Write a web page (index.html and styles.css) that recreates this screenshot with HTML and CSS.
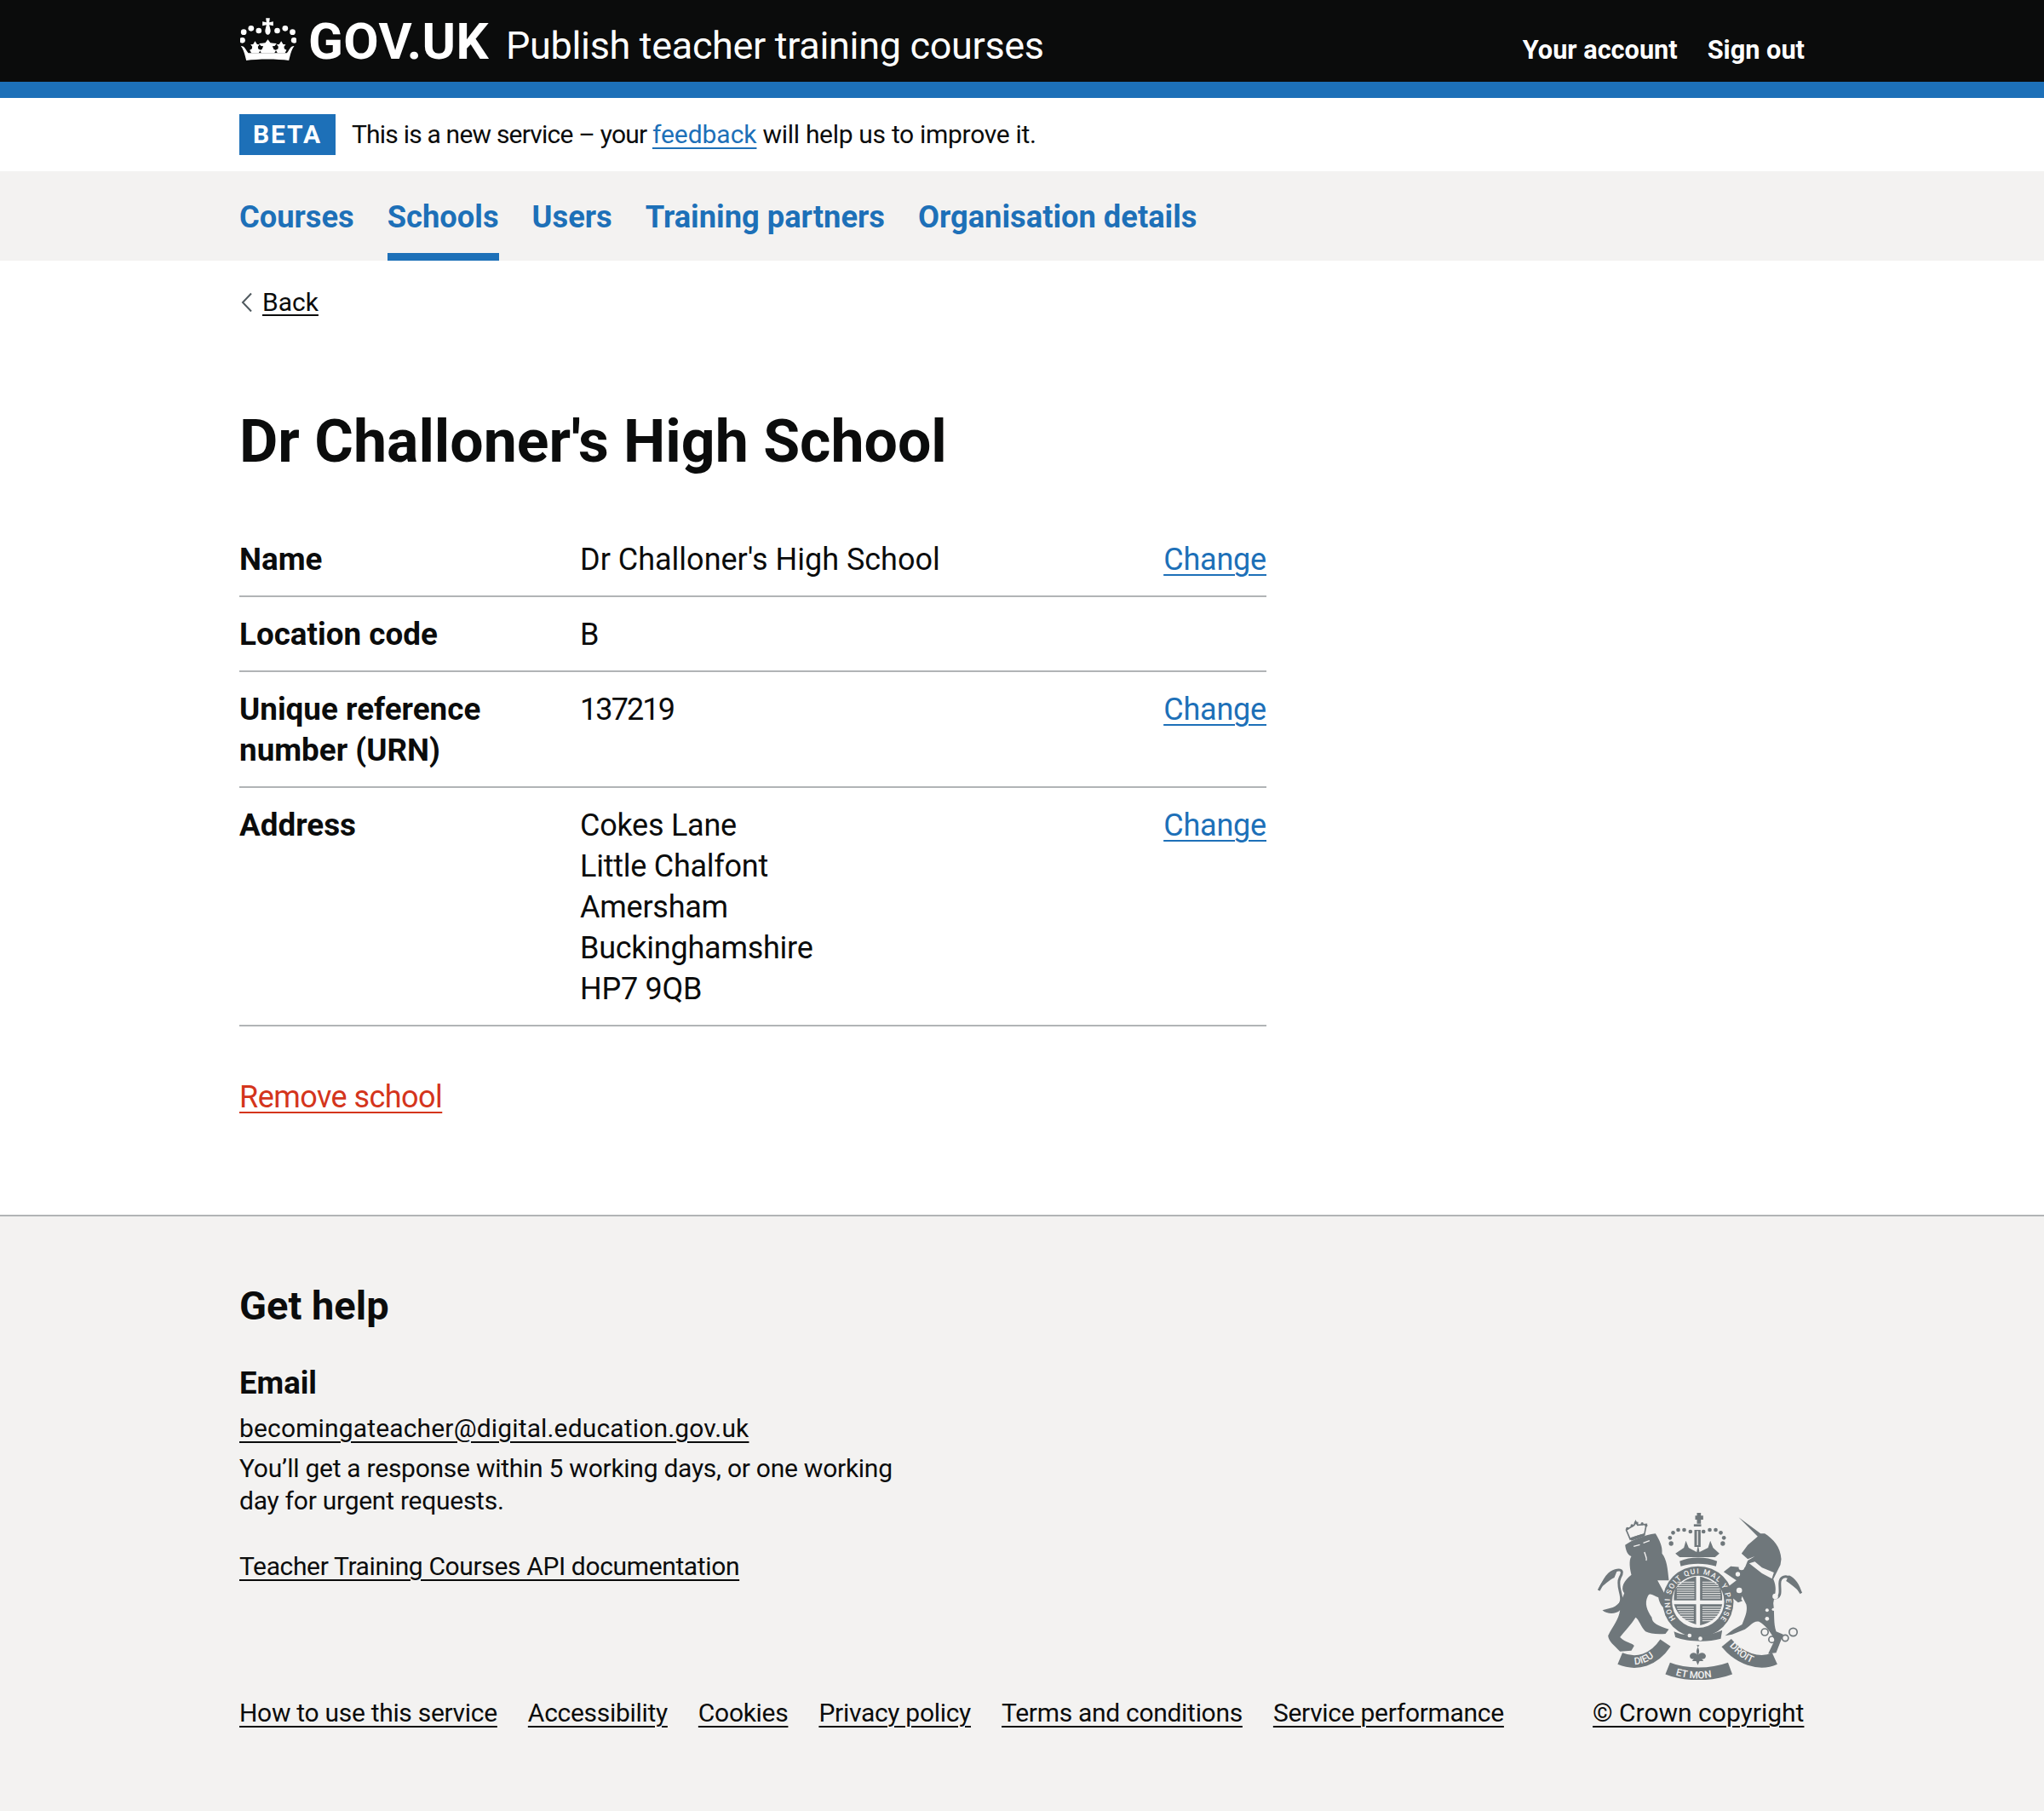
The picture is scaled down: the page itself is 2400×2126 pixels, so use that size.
FILE: index.html
```html
<!DOCTYPE html>
<html lang="en">
<head>
<meta charset="utf-8">
<title>Dr Challoner's High School</title>
<link rel="stylesheet" href="styles.css">
</head>
<body>
<header class="top">
  <div class="wrap top-in">
    <a class="logo" href="#">
      <svg class="crown" viewBox="68 2 197 150" aria-hidden="true">
        <g fill="#fff">
          <circle cx="80" cy="52" r="10"/><circle cx="106" cy="39" r="10"/><circle cx="133" cy="47" r="10"/>
          <circle cx="198" cy="47" r="10"/><circle cx="226" cy="39" r="10"/><circle cx="252" cy="52" r="10"/>
          <circle cx="75" cy="81" r="10"/><circle cx="257" cy="81" r="10"/>
          <path d="M158 3h14l-2 15 14-3v15l-14-3 4 16c2 10-3 18-9 18s-11-8-9-18l4-16-14 3V15l14 3z"/>
          <path d="M70 101c10-1 15 8 21 18l5 7h136l5-7c6-10 11-19 21-18-8 10-12 24-15 35l-4 16c-40-6-110-6-150 0l-4-16c-3-11-7-25-15-35z"/>
          <path d="M120 84l7 11 9 1-6 7 1 8 8 4-6 11h-26l-6-11 8-4 1-8-6-7 9-1z"/>
          <path d="M165 78l9 12 11 1 11 1-7 9-8 1 5 11 8 3-6 10h-46l-6-10 8-3 5-11-8-1-7-9 11-1 11-1z"/>
          <path d="M212 84l7 11 9 1-6 7 1 8 8 4-6 11h-26l-6-11 8-4 1-8-6-7 9-1z"/>
        </g>
      </svg>
      <span class="logo-text">GOV.UK</span>
    </a>
    <a class="service" href="#">Publish teacher training courses</a>
    <nav class="account">
      <a href="#">Your account</a>
      <a href="#">Sign out</a>
    </nav>
  </div>
</header>
<div class="rule"></div>
<div class="beta">
  <strong class="tag">BETA</strong>
  <span class="beta-text"><span class="beta-lead">This is a new service – your </span><a href="#">feedback</a> will help us to improve it.</span>
</div>
<nav class="tabs">
  <div class="wrap tabs-in">
    <a href="#">Courses</a>
    <a href="#" class="current">Schools</a>
    <a href="#">Users</a>
    <a href="#">Training partners</a>
    <a href="#">Organisation details</a>
  </div>
</nav>
<main class="main">
  <a class="back" href="#"><svg class="chev" viewBox="0 0 14 24" aria-hidden="true"><path d="M12 1.5 2 12l10 10.5" fill="none" stroke="#505a5f" stroke-width="2"/></svg><span>Back</span></a>
  <h1 class="title">Dr Challoner's High School</h1>
  <dl class="summary">
    <div class="row"><dt>Name</dt><dd>Dr Challoner's High School</dd><dd class="act"><a href="#">Change</a></dd></div>
    <div class="row"><dt>Location code</dt><dd>B</dd><dd class="act"></dd></div>
    <div class="row"><dt>Unique reference number (URN)</dt><dd><span class="num">137219</span></dd><dd class="act"><a href="#">Change</a></dd></div>
    <div class="row"><dt>Address</dt><dd class="addr">Cokes Lane<br>Little Chalfont<br>Amersham<br>Buckinghamshire<br>HP7 9QB</dd><dd class="act"><a href="#">Change</a></dd></div>
  </dl>
  <a class="remove" href="#">Remove school</a>
</main>
<footer class="foot">
  <div class="wrap foot-in">
    <div class="foot-left">
      <h2 class="help">Get help</h2>
      <h3 class="email">Email</h3>
      <p class="mail"><a href="#">becomingateacher@digital.education.gov.uk</a></p>
      <p class="resp">You’ll get a response within 5 working days, or one working day for urgent requests.</p>
      <p class="api"><a href="#">Teacher Training Courses API documentation</a></p>
      <ul class="meta">
        <li><a href="#">How to use this service</a></li>
        <li><a href="#">Accessibility</a></li>
        <li><a href="#">Cookies</a></li>
        <li><a href="#">Privacy policy</a></li>
        <li><a href="#">Terms and conditions</a></li>
        <li><a href="#">Service performance</a></li>
      </ul>
    </div>
    <div class="foot-right">
      <svg class="crest" viewBox="60 40 740 600" aria-label="Royal coat of arms">
        <defs>
          <path id="gar" d="M346 425A99 99 0 1 1 504 425"/>
          <path id="rib-l" d="M190 585C230 590 270 570 305 520"/>
          <path id="rib-m" d="M335 620C390 640 460 640 515 620"/>
          <path id="rib-r" d="M530 515C570 560 610 590 650 585"/>
        </defs>
        <g class="ink">
          <path d="M168 165C190 150 235 130 275 125C290 150 300 170 298 195C315 215 318 250 322 290L282 290L325 370L318 392C300 388 290 375 285 350C270 345 255 330 248 345C235 370 245 395 262 420C262 440 285 450 322 462L310 478C280 480 255 478 240 470C225 455 215 425 205 420C190 445 165 470 150 490C170 510 195 510 200 520L190 537L150 540C130 520 110 505 108 485C125 450 145 430 150 395C135 410 105 410 88 395L125 385C150 375 160 350 165 335C150 315 165 290 190 270C185 250 180 220 190 205C175 200 170 180 168 165Z"/>
          <path class="face" d="M198 170l22-6M232 158l22-8M236 190c4 14 10 22 6 30"/>
          <path class="tail" d="M128 392C185 360 130 320 150 280C170 245 140 250 118 262C100 272 90 300 75 325"/>
          <path d="M72 325C85 290 110 265 140 255L130 280C110 290 95 305 72 325Z"/>
          <path d="M172 112L200 95L205 82L212 95L243 92L236 128C220 130 200 138 186 145Z" class="hollow"/>
          <circle cx="176" cy="107" r="5"/><circle cx="192" cy="97" r="5"/><circle cx="228" cy="90" r="5"/><circle cx="242" cy="96" r="5"/><path d="M200 84h14v8h-14z"/><path d="M186 140l50-16 2 10-48 16z"/>
          <path d="M568 68L645 125L660 125C690 145 715 170 718 215L715 235L690 285C705 320 695 340 690 370C695 410 690 440 700 470L725 480L700 545L672 548L695 500C680 470 660 445 640 435C620 430 610 450 590 462L545 480L520 485L550 462L580 445C590 420 600 400 595 375L580 345L575 365L520 320L560 290L515 260L540 240L590 245L600 220L625 205L600 215L578 195L600 165L635 135Z"/>
          <path class="tail" d="M693 352C735 350 695 290 725 278C750 268 765 300 788 335"/>
          <path d="M745 272C765 280 785 305 790 335C770 320 750 300 735 292Z"/>
          <circle cx="330" cy="160" r="8"/><circle cx="326" cy="140" r="7"/><circle cx="337" cy="122" r="7"/><circle cx="355" cy="112" r="7"/><circle cx="376" cy="112" r="7"/><circle cx="398" cy="118" r="7"/>
          <circle cx="512" cy="160" r="8"/><circle cx="516" cy="140" r="7"/><circle cx="505" cy="122" r="7"/><circle cx="487" cy="112" r="7"/><circle cx="466" cy="112" r="7"/><circle cx="444" cy="118" r="7"/>
          <path d="M415 62h6v-10h14v10h8v14h-8v14h-14v-14h-6z"/><rect x="410" y="92" width="26" height="8"/>
          <path d="M412 112h22v60h-22z"/><path class="thin" d="M423 116v50"/>
          <path d="M345 195L375 175L382 150L392 175L420 190L425 165L430 190L460 175L468 150L478 175L500 195L485 208H360Z"/>
          <path d="M360 222C395 205 455 205 492 222L488 240C450 228 400 228 364 240Z"/>
          <circle cx="425" cy="365" r="125"/>
          <circle cx="425" cy="365" r="92" class="paper"/>
          <path d="M345 320C375 285 400 280 418 276V360H340C340 345 340 335 345 320Z"/>
          <path d="M432 276C455 282 490 295 505 320C510 335 510 345 510 360H432Z"/>
          <path d="M340 374H418V445C385 435 355 420 340 374Z"/>
          <path d="M432 374H510C500 420 470 440 432 448Z"/>
          <path class="stripe" d="M352 296h60M352 304h60M352 312h60M350 320h62M350 328h62M350 336h62M350 344h62M350 352h62M440 296h50M440 304h56M440 312h60M440 320h62M440 328h62M440 336h64M440 344h64M440 352h64M440 384h66M440 392h66M440 400h64M440 408h62M440 416h60M440 424h56M440 432h46M350 384h60M352 392h58M356 400h54M360 408h50M364 416h46M372 424h38M380 432h30"/>
          <path d="M340 470C380 490 460 490 510 465L505 495C455 510 385 505 345 490Z"/>
          <circle cx="395" cy="484" r="7" class="paper"/><circle cx="433" cy="495" r="7" class="paper"/>
          <path d="M506 295L582 362L566 368L496 310Z"/>
          <circle cx="578" cy="244" r="10" class="paper"/><circle cx="565" cy="268" r="8" class="paper"/><circle cx="570" cy="325" r="10" class="paper"/><circle cx="697" cy="346" r="10" class="paper"/><circle cx="668" cy="395" r="6" class="paper"/><circle cx="690" cy="392" r="5" class="paper"/><circle cx="668" cy="425" r="7" class="paper"/>
          <path d="M605 230L625 224L650 245L692 262L685 284L650 265Z" class="paper"/>
          <g class="rings"><circle cx="660" cy="472" r="12"/><circle cx="685" cy="498" r="11"/><circle cx="732" cy="493" r="11"/><circle cx="760" cy="472" r="14"/></g>
          <path class="rib" d="M150 565C210 590 270 570 310 510"/>
          <path class="rib" d="M318 600C380 625 470 625 538 600"/>
          <path class="rib" d="M525 510C570 565 640 590 695 565"/>
          <path d="M420 518c8 12 12 22 6 34c8-12 22-8 26 2c2 10-8 16-14 12l6 8h-14l-6 14-6-14h-14l6-8c-6 4-16-2-14-12c4-10 18-14 26-2c-6-12-2-22 8-34z"/>
        </g>
        <g class="motto">
          <text class="m-ring"><textPath href="#gar" textLength="440">HONI SOIT QUI MAL Y PENSE</textPath></text>
          <text class="m-rib"><textPath href="#rib-l" startOffset="8%">DIEU</textPath></text>
          <text class="m-rib"><textPath href="#rib-m" startOffset="6%">ET MON</textPath></text>
          <text class="m-rib"><textPath href="#rib-r" startOffset="5%">DROIT</textPath></text>
        </g>
      </svg>
      <a class="copy" href="#">© Crown copyright</a>
    </div>
  </div>
</footer>
</body>
</html>
```
FILE: styles.css
```css
* { box-sizing: border-box; }
html, body { margin: 0; padding: 0; }
body { font-family: Roboto, "Liberation Sans", sans-serif; color: #0b0c0c; background: #f3f2f1; font-size: 36px; line-height: 48px; }
a { color: inherit; text-decoration-thickness: 2px; text-underline-offset: 5px; }
.wrap { width: 1838px; margin-left: 281px; }

/* header */
.top { background: #0b0c0c; height: 96px; color: #fff; }
.top-in { display: flex; align-items: baseline; height: 96px; padding-top: 14px; }
.logo { display: flex; align-items: baseline; text-decoration: none; color: #fff; }
.crown { width: 66px; height: 50px; margin: 7px 14px 0 1px; align-self: flex-start; }
.logo-text { font-size: 60px; line-height: 70px; font-weight: 700; letter-spacing: 0.4px; }
.service { margin-left: 20px; font-size: 45px; line-height: 70px; color: #fff; text-decoration: none; letter-spacing: -0.33px; }
.account { margin-left: auto; display: flex; gap: 35px; font-size: 30.7px; font-weight: 700; }
.account a { text-decoration: none; }
.rule { height: 19px; background: #1d70b8; }

/* beta */
.beta { display: flex; align-items: center; height: 86px; padding-left: 281px; background: #fff; }
.tag { display: block; width: 113px; height: 48px; background: #1d70b8; color: #fff; font-size: 30px; line-height: 48px; text-align: center; letter-spacing: 1.9px; font-weight: 700; }
.beta-text { margin-left: 19px; font-size: 30px; letter-spacing: -0.31px; }
.beta-lead { letter-spacing: -0.8px; }
.beta-text a { letter-spacing: -0.05px; }
.beta-text a, .act a { color: #1d70b8; }
.act a { letter-spacing: -0.2px; }

/* nav */
.tabs { background: #f3f2f1; height: 105px; }
.tabs-in { display: flex; gap: 39px; }
.tabs a { display: block; height: 105px; padding-top: 30px; font-size: 36.3px; font-weight: 700; color: #1d70b8; text-decoration: none; }
.tabs a.current { border-bottom: 9px solid #1d70b8; }

/* main */
.main { padding: 25px 0 114px 281px; background: #fff; }
.back { display: inline-flex; align-items: center; font-size: 30px; line-height: 38px; text-decoration: none; }
.back span { text-decoration: underline; text-decoration-thickness: 2px; text-underline-offset: 4px; }
.chev { width: 14px; height: 24px; margin-right: 11px; margin-left: 2px; }
.title { margin: 91px 0 47px; font-size: 69.8px; line-height: 96px; font-weight: 700; }
.summary { width: 1206px; margin: 0; }
.row { display: flex; padding: 20px 0 18px; border-bottom: 2px solid #b1b4b6; }
.row dt { width: 400px; font-size: 36.8px; font-weight: 700; padding-right: 40px; }
.row dd { margin: 0; flex: 1; }
.row dd.act { flex: none; margin-left: auto; text-align: right; }
.row dd.addr { letter-spacing: -0.25px; }
.num { letter-spacing: -1.9px; }
.remove { display: block; width: max-content; margin-top: 59px; color: #d4351c; letter-spacing: -0.55px; }

/* footer */
.foot { border-top: 2px solid #b1b4b6; background: #f3f2f1; height: 700px; }
.foot-in { display: flex; justify-content: space-between; align-items: flex-start; }
.foot-left { width: 1490px; padding-top: 75px; }
.help { margin: 0; font-size: 47px; line-height: 60px; font-weight: 700; }
.email { margin: 37px 0 0; font-size: 36.5px; line-height: 48px; font-weight: 700; }
.mail, .resp, .api { margin: 0; font-size: 30px; line-height: 38.4px; }
.mail { margin-top: 9.5px; letter-spacing: 0.15px; }
.resp { margin-top: 9px; max-width: 790px; letter-spacing: -0.26px; }
.api { margin-top: 38px; letter-spacing: -0.36px; }
.meta { list-style: none; display: flex; gap: 36px; margin: 134px 0 0; padding: 0; font-size: 30px; line-height: 38.4px; white-space: nowrap; letter-spacing: -0.3px; }
.foot-right { display: flex; flex-direction: column; align-items: flex-start; padding-top: 344px; }
.crest { display: block; width: 247px; height: 200px; margin-left: 2px; margin-bottom: 20px; }
.copy { font-size: 30px; line-height: 38.4px; white-space: nowrap; }

/* crest */
.ink { fill: #6f777b; }
.tail { fill: none; stroke: #6f777b; stroke-width: 9; }
.face { fill: none; stroke: #f3f2f1; stroke-width: 4; }
.hollow { fill: #f3f2f1; stroke: #6f777b; stroke-width: 5; }
.paper { fill: #f3f2f1; }
.thin { stroke: #f3f2f1; stroke-width: 4; fill: none; }
.stripe { stroke: #f3f2f1; stroke-width: 3; fill: none; }
.rings { fill: none; stroke: #6f777b; stroke-width: 5; }
.rib { fill: none; stroke: #6f777b; stroke-width: 44; }
.motto { fill: #f3f2f1; font-family: Roboto, sans-serif; font-weight: 500; }
.m-ring { font-size: 26px; }
.m-rib { font-size: 35px; }
```
